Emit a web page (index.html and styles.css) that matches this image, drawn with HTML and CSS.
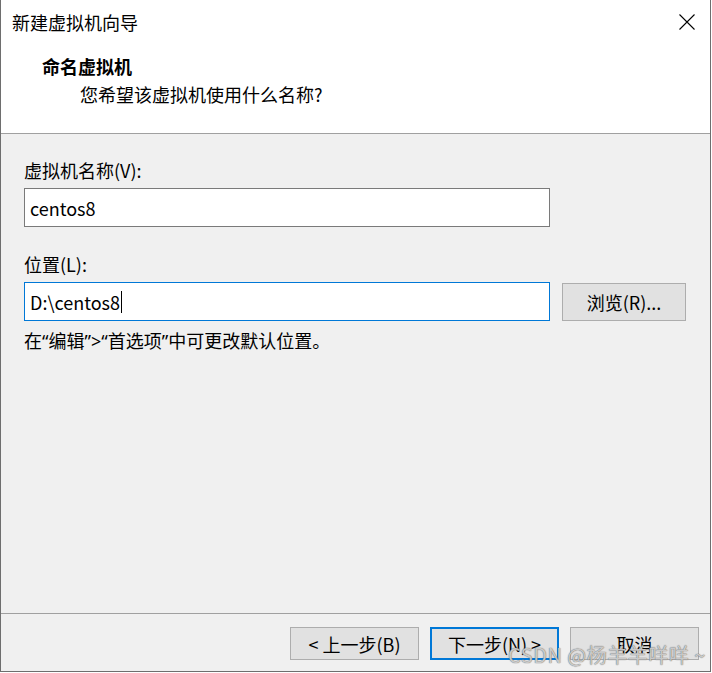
FILE: index.html
```html
<!DOCTYPE html>
<html lang="zh-CN">
<head>
<meta charset="utf-8">
<title>新建虚拟机向导</title>
<link rel="stylesheet" href="styles.css">
</head>
<body>
<div class="window">
  <div class="header">
    <div class="titlebar">
      <span class="title">新建虚拟机向导</span>
      <svg class="close" width="16" height="16" viewBox="0 0 16 16"><path d="M0.5 0.5 L15.5 15.5 M15.5 0.5 L0.5 15.5" stroke="#000" stroke-width="1.1" fill="none"/></svg>
    </div>
    <div class="intro">
      <div class="intro-title">命名虚拟机</div>
      <div class="intro-sub">您希望该虚拟机使用什么名称?</div>
    </div>
  </div>
  <div class="content">
    <div class="label">虚拟机名称(V):</div>
    <div class="field"><span>centos8</span></div>
    <div class="label label-gap">位置(L):</div>
    <div class="row">
      <div class="field focused"><span>D:\centos8</span><span class="caret"></span></div>
      <div class="btn browse">浏览(R)...</div>
    </div>
    <div class="hint">在“编辑”&gt;“首选项”中可更改默认位置。</div>
  </div>
  <div class="footer">
    <div class="btn">&lt; 上一步(B)</div>
    <div class="btn default">下一步(N) &gt;</div>
    <div class="btn">取消</div>
    <div class="watermark">CSDN @杨羊羊咩咩 ~</div>
  </div>
</div>
</body>
</html>
```
FILE: styles.css
```css
* { box-sizing: border-box; }
html, body { margin: 0; padding: 0; background: #ffffff; }
body {
  font-family: "Noto Sans CJK SC", "Noto Sans", sans-serif;
  font-size: 18px;
  line-height: 24px;
  color: #000;
}
.window {
  width: 711px;
  height: 672px;
  border-left: 1px solid #6e6e6e;
  border-right: 1px solid #6e6e6e;
  border-bottom: 1px solid #6e6e6e;
  background: #f0f0f0;
  display: flex;
  flex-direction: column;
  position: relative;
}
.header {
  background: #ffffff;
  height: 134px;
  border-bottom: 1px solid #a0a0a0;
}
.titlebar {
  height: 44px;
  display: flex;
  align-items: center;
  justify-content: space-between;
  padding-left: 11px;
  padding-right: 15px;
}
.title { font-size: 18px; }
.close { display: block; }
.intro {
  padding-top: 10px;
  padding-left: 41px;
}
.intro-title {
  font-weight: bold;
  font-size: 18px;
}
.intro-sub {
  margin-top: 4px;
  padding-left: 38px;
  font-size: 18px;
}
.content {
  flex: 1;
  padding: 24px 0 0 23px;
}
.label { height: 24px; }
.label-gap { margin-top: 25px; }
.field {
  margin-top: 6px;
  width: 526px;
  height: 39px;
  background: #ffffff;
  border: 1px solid #7a7a7a;
  padding-left: 5px;
  display: flex;
  align-items: center;
}
.field.focused { border-color: #0078d7; }
.caret {
  display: inline-block;
  width: 1px;
  height: 22px;
  background: #000;
  margin-left: 1px;
}
.row {
  display: flex;
  align-items: center;
  gap: 12px;
  margin-top: 6px;
}
.row .field { margin-top: 0; }
.btn {
  width: 129px;
  height: 33px;
  background: #e1e1e1;
  border: 1px solid #adadad;
  display: flex;
  align-items: center;
  justify-content: center;
}
.browse {
  width: 124px;
  height: 38px;
}
.hint {
  margin-top: 8px;
  font-family: "Noto Sans", "Noto Sans CJK SC", sans-serif;
}
.footer {
  height: 58px;
  border-top: 1px solid #a0a0a0;
  display: flex;
  justify-content: flex-end;
  align-items: flex-start;
  gap: 11px;
  padding: 13px 11px 0 0;
  position: relative;
}
.btn.default {
  border: 2px solid #0078d7;
}
.watermark {
  position: absolute;
  left: 507px;
  top: 28px;
  font-size: 20px;
  line-height: 26px;
  letter-spacing: 0.5px;
  color: rgba(235, 235, 235, 0.75);
  text-shadow: 0 0 1px rgba(80, 80, 80, 0.8), 0 0 1px rgba(80, 80, 80, 0.6);
  white-space: nowrap;
}
```
